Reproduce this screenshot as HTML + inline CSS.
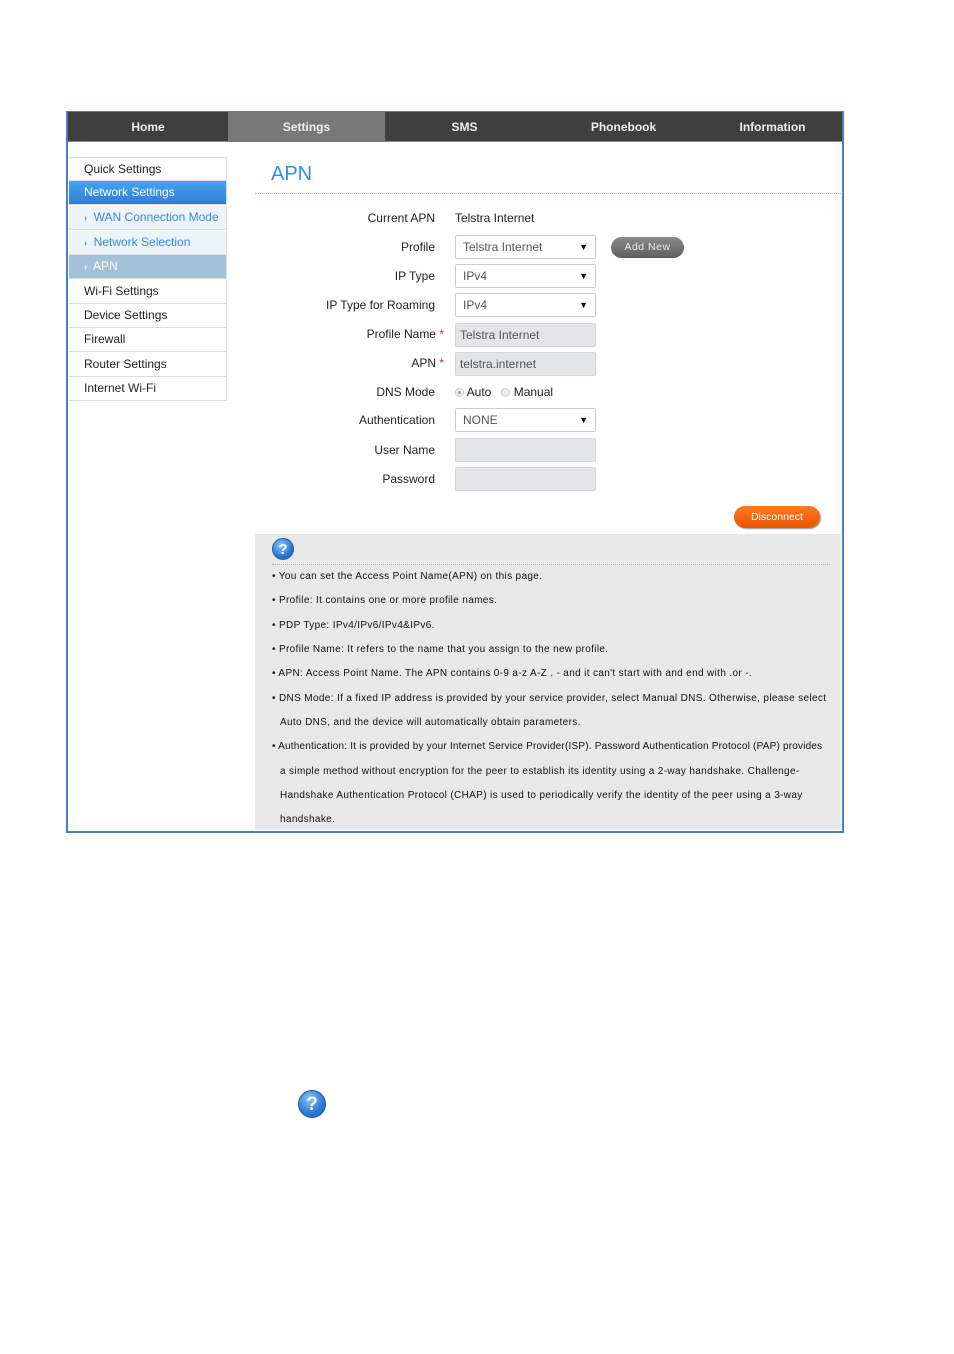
<!DOCTYPE html>
<html><head><meta charset="utf-8"><style>
*{margin:0;padding:0;box-sizing:border-box}
body{width:954px;height:1354px;background:#fff;font-family:"Liberation Sans",sans-serif;position:relative;overflow:hidden}
.a{position:absolute}
.frame{left:66px;top:111px;width:778px;height:722px;border:2px solid #4a7fc0}
.nav{left:68px;top:112px;width:774px;height:30px;background:#3f3f3f;border-bottom:1px solid #888}
.nav div{position:absolute;top:0;height:30px;line-height:30px;color:#eee;font-weight:bold;font-size:12px;text-align:center}
.side div{position:absolute;left:69px;width:158px;height:24px;line-height:22px;font-size:12px;color:#222;padding-left:15px;border-bottom:1px solid #ddd;background:#fff;border-right:1px solid #ddd}
.lbl{position:absolute;font-size:12px;color:#222;text-align:right;width:200px}
.in{position:absolute;left:455px;width:141px;height:24px;border:1px solid #ccc;border-radius:2px;font-size:12px;color:#555;line-height:22px;padding-left:7px;background:#fff}
.in.g{background:#e3e5e7;border-color:#d4d6d8;padding-left:4px}
.in .ar{position:absolute;right:7px;top:0;font-size:9px;color:#111}
.help{left:255px;top:534px;width:586px;height:296px;background:#e8e8e8}
.b{position:absolute;left:272px;font-size:10px;letter-spacing:0.35px;color:#111;white-space:nowrap}
.q{border-radius:50%;background:radial-gradient(circle at 40% 30%,#8fc4f5,#2a78d6 60%,#1a5fb8);color:#fff;font-weight:bold;text-align:center;border:1px solid #1c5ea8}
</style></head><body>
<div class="a frame"></div>
<div class="a nav">
<div style="left:0;width:160px">Home</div>
<div style="left:160px;width:157px;background:#787878">Settings</div>
<div style="left:317px;width:159px">SMS</div>
<div style="left:476px;width:159px">Phonebook</div>
<div style="left:635px;width:139px">Information</div>
</div>
<div class="side">
<div style="top:157px;border-top:1px solid #ddd">Quick Settings</div>
<div style="top:181px;background:linear-gradient(#49a3ec,#2b7fd8);color:#fff">Network Settings</div>
<div style="top:206px;background:#eef3f7;color:#2f8fe0"><span style="font-size:9px;font-weight:bold">›</span>&nbsp; WAN Connection Mode</div>
<div style="top:231px;background:#eef3f7;color:#2f8fe0"><span style="font-size:9px;font-weight:bold">›</span>&nbsp; Network Selection</div>
<div style="top:255px;background:#a4c2d7;color:#fff"><span style="font-size:9px;font-weight:bold">›</span>&nbsp; APN</div>
<div style="top:280px">Wi-Fi Settings</div>
<div style="top:304px">Device Settings</div>
<div style="top:328px">Firewall</div>
<div style="top:353px">Router Settings</div>
<div style="top:377px">Internet Wi-Fi</div>
</div>
<div class="a" style="left:271px;top:163px;font-size:20px;color:#2f8fe0">APN</div>
<div class="a" style="left:255px;top:193px;width:586px;border-top:1px dotted #8ab8e0"></div>

<div class="lbl" style="left:235px;top:211px">Current APN</div>
<div class="a" style="left:455px;top:211px;font-size:12px;color:#222">Telstra Internet</div>
<div class="lbl" style="left:235px;top:240px">Profile</div>
<div class="in" style="top:235px">Telstra Internet<span class="ar">▼</span></div>
<div class="a" style="left:611px;top:237px;width:73px;height:21px;border-radius:11px;background:linear-gradient(#8a8a8a,#5e5e5e);color:#eee;font-size:10.5px;text-align:center;line-height:21px;letter-spacing:.5px">Add New</div>
<div class="lbl" style="left:235px;top:269px">IP Type</div>
<div class="in" style="top:264px">IPv4<span class="ar">▼</span></div>
<div class="lbl" style="left:235px;top:298px">IP Type for Roaming</div>
<div class="in" style="top:293px">IPv4<span class="ar">▼</span></div>
<div class="lbl" style="left:244px;top:327px">Profile Name <span style="color:#d22">*</span></div>
<div class="in g" style="top:323px">Telstra Internet</div>
<div class="lbl" style="left:244px;top:356px">APN <span style="color:#d22">*</span></div>
<div class="in g" style="top:352px">telstra.internet</div>
<div class="lbl" style="left:235px;top:385px">DNS Mode</div>
<div class="a" style="left:455px;top:385px;font-size:12px;color:#222"><span style="display:inline-block;width:9px;height:9px;border:1px solid #ccc;border-radius:50%;background:radial-gradient(#999 25%,#eee 35%);vertical-align:-1px"></span> Auto &nbsp;&nbsp;<span style="display:inline-block;width:9px;height:9px;border:1px solid #ccc;border-radius:50%;background:#eee;vertical-align:-1px"></span> Manual</div>
<div class="lbl" style="left:235px;top:413px">Authentication</div>
<div class="in" style="top:408px">NONE<span class="ar">▼</span></div>
<div class="lbl" style="left:235px;top:443px">User Name</div>
<div class="in g" style="top:438px"></div>
<div class="lbl" style="left:235px;top:472px">Password</div>
<div class="in g" style="top:467px"></div>
<div class="a" style="left:734px;top:506px;width:86px;height:22px;border-radius:11px;background:linear-gradient(#ff7a20,#e65500);color:#fff;font-size:10.5px;text-align:center;line-height:22px;box-shadow:1px 1px 1px #999">Disconnect</div>

<div class="a help"></div>
<div class="a q" style="left:272px;top:538px;width:22px;height:22px;line-height:21px;font-size:15px">?</div>
<div class="a" style="left:272px;top:564px;width:558px;border-top:1px dotted #8ab8e0"></div>
<div class="b" style="top:571px">• You can set the Access Point Name(APN) on this page.</div>
<div class="b" style="top:595px">• Profile: It contains one or more profile names.</div>
<div class="b" style="top:620px">• PDP Type: IPv4/IPv6/IPv4&amp;IPv6.</div>
<div class="b" style="top:644px">• Profile Name: It refers to the name that you assign to the new profile.</div>
<div class="b" style="top:668px">• APN: Access Point Name. The APN contains 0-9 a-z A-Z . - and it can't start with and end with .or -.</div>
<div class="b" style="top:693px">• DNS Mode: If a fixed IP address is provided by your service provider, select Manual DNS. Otherwise, please select</div>
<div class="b" style="top:717px;left:280px">Auto DNS, and the device will automatically obtain parameters.</div>
<div class="b" style="top:741px;letter-spacing:0.2px">• Authentication: It is provided by your Internet Service Provider(ISP). Password Authentication Protocol (PAP) provides</div>
<div class="b" style="top:766px;left:280px">a simple method without encryption for the peer to establish its identity using a 2-way handshake. Challenge-</div>
<div class="b" style="top:790px;left:280px">Handshake Authentication Protocol (CHAP) is used to periodically verify the identity of the peer using a 3-way</div>
<div class="b" style="top:814px;left:280px">handshake.</div>

<div class="a q" style="left:298px;top:1090px;width:28px;height:28px;line-height:27px;font-size:19px">?</div>
</body></html>
